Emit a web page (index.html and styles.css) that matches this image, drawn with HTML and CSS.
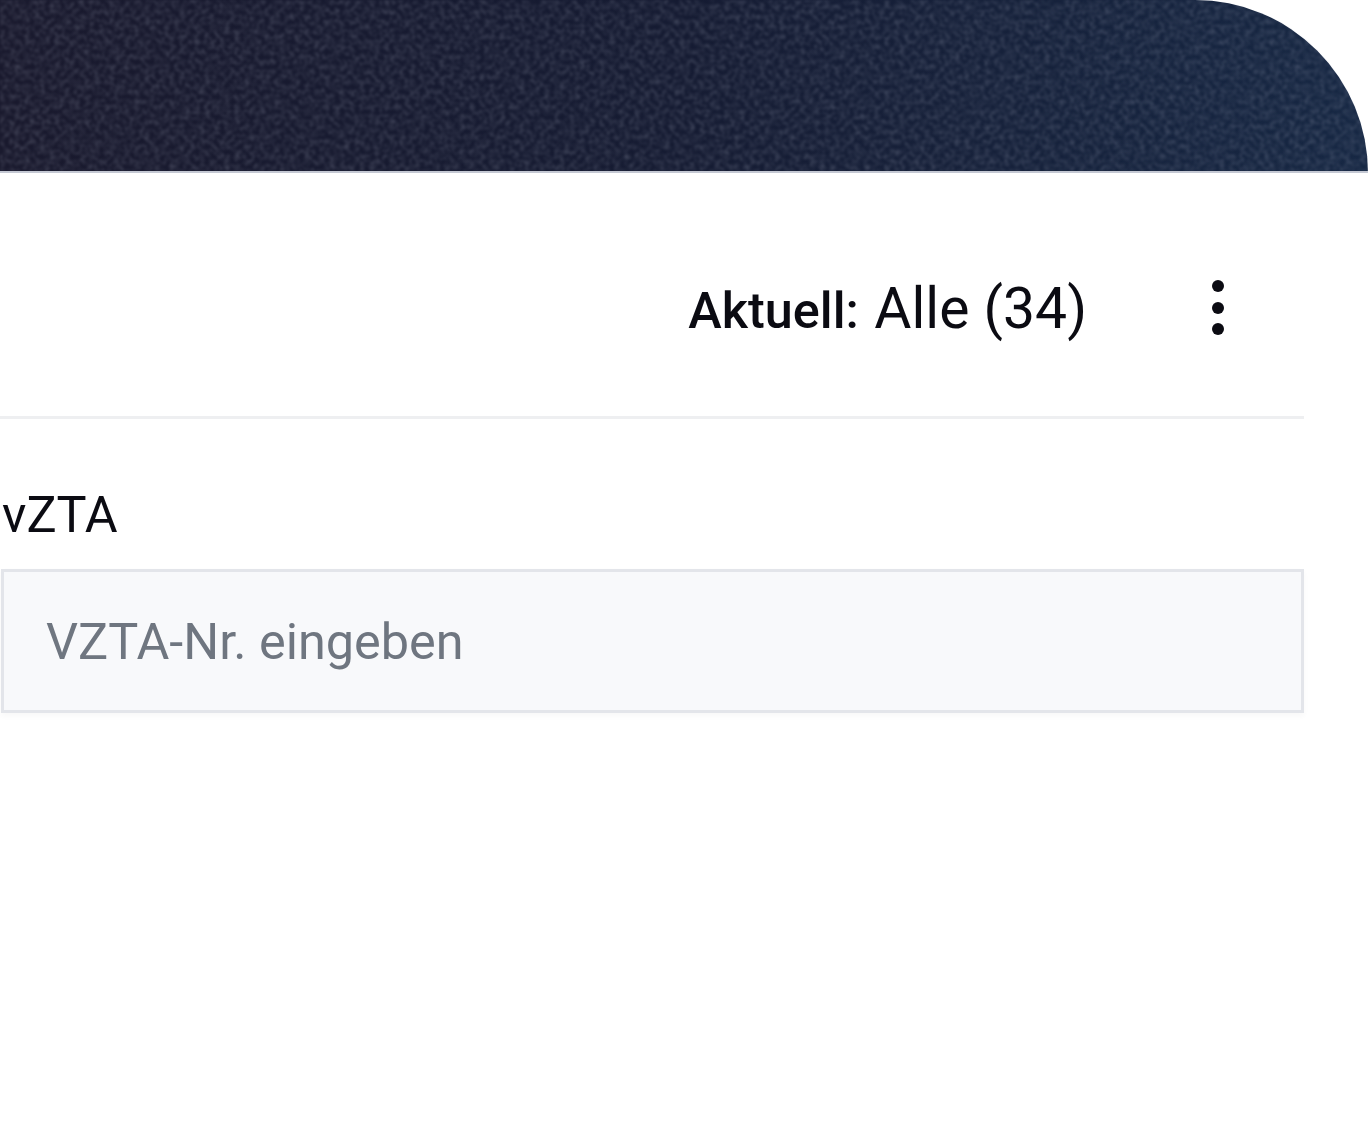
FILE: index.html
```html
<!DOCTYPE html>
<html lang="de">
<head>
    <meta charset="UTF-8">
    <meta name="viewport" content="width=device-width, initial-scale=1.0">
    <title>vZTA</title>
    <link rel="stylesheet" href="styles.css">
</head>
<body>
    <!-- Kopfbereich -->
    <div class="hero">
        <svg class="hero-noise" width="100%" height="100%">
            <filter id="grain" x="0" y="0" width="100%" height="100%">
                <feTurbulence type="fractalNoise" baseFrequency="0.2" numOctaves="3" seed="7"/>
                <feColorMatrix type="matrix" values="0 0 0 0 0.5  0 0 0 0 0.53  0 0 0 0 0.65  1.5 0 0 0 -0.55"/>
                <feGaussianBlur stdDeviation="0.8"/>
            </filter>
            <rect width="100%" height="100%" filter="url(#grain)"/>
        </svg>
    </div>

    <div class="content">
        <!-- Werkzeugleiste -->
        <div class="toolbar">
            <span class="current"><b>Aktuell:</b> <span class="current-value">Alle (34)</span></span>
            <button class="menu-button" aria-label="Menü">
                <svg width="14" height="56" viewBox="0 0 14 56">
                    <circle cx="7" cy="6" r="6"/>
                    <circle cx="7" cy="28" r="6"/>
                    <circle cx="7" cy="49" r="6"/>
                </svg>
            </button>
        </div>

        <!-- Filter -->
        <label class="field-label" for="vzta">vZTA</label>
        <input class="field-input" id="vzta" type="text" placeholder="VZTA-Nr. eingeben">
    </div>
</body>
</html>
```

FILE: styles.css
```css
body {
    font-family: Roboto, "Liberation Sans", sans-serif;
    margin: 0;
    padding: 0;
    height: 1126px;
    overflow: hidden;
    background-color: #fff;
    color: #0b0b12;
}
.hero {
    position: relative;
    height: 171px;
    border-top-right-radius: 178px;
    overflow: hidden;
    background: linear-gradient(90deg, #19192d 0%, #151b32 50%, #172844 100%);
    border-bottom: 2px solid #c4c8d3;
}
.hero-noise {
    position: absolute;
    top: 0;
    left: 0;
    opacity: 0.3;
}
.content {
    padding-right: 64px;
    filter: blur(0.7px);
}
.toolbar {
    display: flex;
    justify-content: flex-end;
    align-items: center;
    height: 243px;
    border-bottom: 3px solid #eeeff1;
    padding-right: 79px;
}
.current {
    font-size: 50.4px;
    margin-top: 28px;
    margin-right: -1px;
}
.current b {
    font-weight: 500;
}
.current-value {
    font-size: 57px;
    margin-left: 3px;
}
.menu-button {
    display: block;
    margin-left: 125px;
    padding: 0;
    border: none;
    background: none;
    fill: #0b0b12;
    height: 56px;
    margin-top: 26px;
}
.field-label {
    display: block;
    margin-top: 68px;
    font-size: 50.4px;
    line-height: 56px;
    padding-left: 2px;
}
.field-input {
    display: block;
    box-sizing: border-box;
    width: calc(100% - 1px);
    height: 144px;
    margin: 26px 0 0 1px;
    padding: 0 42px;
    border: 3px solid #e3e5ea;
    background-color: #f8f9fb;
    font-family: inherit;
    font-size: 50.4px;
    box-shadow: 0 3px 6px rgba(0, 0, 0, 0.03);
}
.field-input::placeholder {
    color: #6f7680;
    opacity: 1;
}
```
